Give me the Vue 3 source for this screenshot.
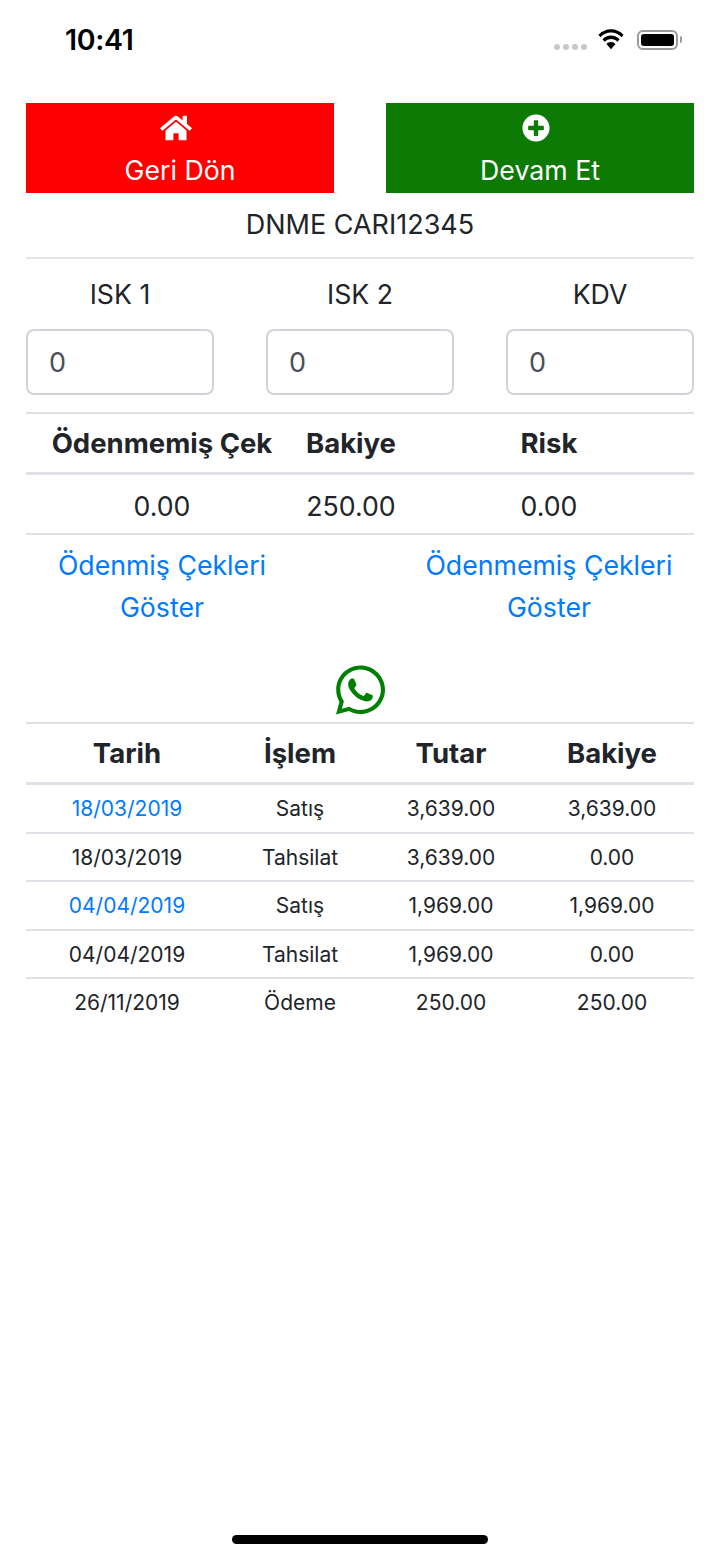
<script setup>
const fields = ['ISK 1', 'ISK 2', 'KDV'];

const rows = [
    { date: '18/03/2019', type: 'Satış', amount: '3,639.00', balance: '3,639.00', link: true },
    { date: '18/03/2019', type: 'Tahsilat', amount: '3,639.00', balance: '0.00', link: false },
    { date: '04/04/2019', type: 'Satış', amount: '1,969.00', balance: '1,969.00', link: true },
    { date: '04/04/2019', type: 'Tahsilat', amount: '1,969.00', balance: '0.00', link: false },
    { date: '26/11/2019', type: 'Ödeme', amount: '250.00', balance: '250.00', link: false },
];
</script>

<template>
    <div class="screen">
        <div class="status-bar">
            <span class="time">10:41</span>
            <div class="status-icons">
                <div class="signal"><i></i><i></i><i></i><i></i></div>
                <svg class="wifi" viewBox="0 0 28 20" preserveAspectRatio="none">
                    <path d="M14 3.2c4.1 0 7.8 1.6 10.6 4.2l1.9-2.1A18.200 18.200 0 0 0 14 .3 18.200 18.200 0 0 0 1.500 5.300l1.900 2.100A15.400 15.400 0 0 1 14 3.200z" />
                    <path d="M14 9c2.500 0 4.800 1 6.500 2.500l2-2.100A12.400 12.400 0 0 0 14 6a12.400 12.400 0 0 0-8.500 3.400l2 2.100A9.700 9.700 0 0 1 14 9z" />
                    <path d="M14 11.900c-1.800 0-3.300.7-4.500 1.700l4.500 4.900 4.500-4.900a6.700 6.700 0 0 0-4.500-1.700z" />
                </svg>
                <div class="battery"><div class="battery-level"></div></div>
                <div class="battery-cap"></div>
            </div>
        </div>

        <main class="content">
            <div class="actions">
                <button class="action action-back">
                    <svg class="action-icon home" viewBox="0 0 576 512">
                        <path d="M280.37 148.26L96 300.11V464a16 16 0 0 0 16 16l112.06-.29a16 16 0 0 0 15.92-16V368a16 16 0 0 1 16-16h64a16 16 0 0 1 16 16v95.640a16 16 0 0 0 16 16.050L464 480a16 16 0 0 0 16-16V300L295.670 148.260a12.190 12.190 0 0 0-15.300 0zM571.600 251.470L488 182.560V44.050a12 12 0 0 0-12-12h-56a12 12 0 0 0-12 12v72.610L318.470 43a48 48 0 0 0-61 0L4.340 251.470a12 12 0 0 0-1.600 16.900l25.500 31A12 12 0 0 0 45.150 301l235.220-193.740a12.190 12.190 0 0 1 15.300 0L530.900 301a12 12 0 0 0 16.900-1.600l25.500-31a12 12 0 0 0-1.700-16.930z" />
                    </svg>
                    <span>Geri Dön</span>
                </button>
                <button class="action action-next">
                    <svg class="action-icon plus" viewBox="0 0 512 512">
                        <path d="M256 8C119 8 8 119 8 256s111 248 248 248 248-111 248-248S393 8 256 8zm144 276c0 6.600-5.400 12-12 12h-92v92c0 6.600-5.400 12-12 12h-56c-6.600 0-12-5.400-12-12v-92h-92c-6.600 0-12-5.400-12-12v-56c0-6.600 5.400-12 12-12h92v-92c0-6.600 5.400-12 12-12h56c6.600 0 12 5.400 12 12v92h92c6.600 0 12 5.400 12 12v56z" />
                    </svg>
                    <span>Devam Et</span>
                </button>
            </div>

            <div class="customer">DNME CARI12345</div>

            <div class="fields">
                <label v-for="field in fields" :key="field" class="field">
                    <span class="field-label">{{ field }}</span>
                    <input class="field-input" type="text" value="0" />
                </label>
            </div>

            <div class="summary summary-head">
                <span>Ödenmemiş Çek</span>
                <span>Bakiye</span>
                <span>Risk</span>
            </div>
            <div class="summary summary-body">
                <span>0.00</span>
                <span>250.00</span>
                <span>0.00</span>
            </div>

            <div class="summary check-links">
                <a class="link">Ödenmiş Çekleri Göster</a>
                <a class="link link-right">Ödenmemiş Çekleri Göster</a>
            </div>

            <div class="whatsapp">
                <svg viewBox="0 0 448 512">
                    <path d="M380.900 97.100C339 55.100 283.200 32 223.900 32c-122.400 0-222 99.600-222 222 0 39.100 10.200 77.300 29.600 111L0 480l117.700-30.900c32.400 17.700 68.900 27 106.100 27h.1c122.300 0 224.100-99.600 224.100-222 0-59.300-25.200-115-67.100-157zm-157 341.600c-33.200 0-65.700-8.900-94-25.700l-6.700-4-69.800 18.300L72 359.200l-4.400-7c-18.500-29.400-28.200-63.300-28.200-98.200 0-101.700 82.800-184.500 184.600-184.500 49.300 0 95.600 19.200 130.400 54.100 34.800 34.900 56.200 81.200 56.100 130.500 0 101.800-84.900 184.600-186.600 184.600zm101.200-138.200c-5.500-2.800-32.800-16.200-37.900-18-5.100-1.900-8.800-2.800-12.500 2.800-3.700 5.600-14.300 18-17.600 21.800-3.200 3.700-6.500 4.200-12 1.400-32.600-16.300-54-29.100-75.500-66-5.700-9.800 5.700-9.100 16.300-30.300 1.800-3.700.9-6.900-.5-9.700-1.400-2.800-12.500-30.100-17.100-41.200-4.500-10.800-9.100-9.300-12.500-9.500-3.200-.2-6.900-.2-10.600-.2-3.700 0-9.700 1.400-14.800 6.900-5.100 5.600-19.400 19-19.400 46.300 0 27.300 19.900 53.700 22.600 57.400 2.800 3.700 39.100 59.700 94.800 83.800 35.200 15.200 49 16.500 66.600 13.900 10.700-1.600 32.800-13.400 37.400-26.400 4.600-13 4.600-24.100 3.200-26.400-1.300-2.500-5-3.900-10.500-6.600z" />
                </svg>
            </div>

            <div class="history">
                <div class="history-row history-head">
                    <span>Tarih</span>
                    <span>İşlem</span>
                    <span>Tutar</span>
                    <span>Bakiye</span>
                </div>
                <div v-for="(row, index) in rows" :key="index" class="history-row history-item">
                    <a v-if="row.link" class="link">{{ row.date }}</a>
                    <span v-else>{{ row.date }}</span>
                    <span>{{ row.type }}</span>
                    <span>{{ row.amount }}</span>
                    <span>{{ row.balance }}</span>
                </div>
            </div>
        </main>

        <div class="home-indicator"></div>
    </div>
</template>

<style scoped>
.screen {
    position: relative;
    width: 720px;
    height: 1558px;
    overflow: hidden;
    background: #fff;
    color: #212529;
    font-family: Inter, "Liberation Sans", sans-serif;
}

/* Status bar */
.status-bar {
    display: flex;
    justify-content: space-between;
    align-items: center;
    height: 103px;
    padding: 0 38px 24px 65px;
    box-sizing: border-box;
}

.time {
    font-size: 28.500px;
    font-weight: 600;
    color: #000;
    letter-spacing: -0.3px;
}

.status-icons {
    display: flex;
    align-items: center;
}

.signal {
    display: flex;
    gap: 3px;
    margin-top: 15px;
    margin-right: 10px;
}

.signal i {
    width: 6px;
    height: 6px;
    border-radius: 50%;
    background: #c8c8c8;
}

.wifi {
    width: 28px;
    height: 22px;
    margin-right: 12px;
    fill: #000;
}

.battery {
    width: 41px;
    height: 20px;
    padding: 2px;
    box-sizing: border-box;
    border: 2px solid #9a9a9a;
    border-radius: 6px;
}

.battery-level {
    height: 100%;
    border-radius: 3px;
    background: #000;
}

.battery-cap {
    width: 2px;
    height: 7px;
    margin-left: 2px;
    border-radius: 0 2px 2px 0;
    background: #9a9a9a;
}

/* Main content */
.content {
    padding: 0 26px;
}

.actions {
    display: flex;
    justify-content: space-between;
}

.action {
    display: flex;
    flex-direction: column;
    align-items: center;
    width: 308px;
    height: 90px;
    padding: 0;
    border: 0;
    color: #fff;
    font-family: inherit;
    font-size: 26.700px;
    line-height: 32px;
}

.action span {
    margin-top: 12px;
}

.action-back {
    background: #ff0000;
}

.action-next {
    background: #0c7a04;
}

.action-icon {
    display: block;
    margin-top: 11px;
    margin-right: 9px;
    height: 28px;
    fill: #fff;
}

.home {
    width: 32px;
}

.plus {
    width: 28px;
}

.customer {
    height: 66px;
    line-height: 64px;
    font-size: 27px;
    text-align: center;
    border-bottom: 2px solid #e4e6e9;
    box-sizing: border-box;
}

.fields {
    display: flex;
    justify-content: space-between;
    padding-bottom: 17px;
}

.field {
    display: flex;
    flex-direction: column;
    width: 188px;
}

.field-label {
    height: 70px;
    line-height: 70px;
    font-size: 26.700px;
    text-align: center;
}

.field-input {
    width: 100%;
    height: 66px;
    padding: 0 21px;
    box-sizing: border-box;
    border: 2px solid #ced4da;
    border-radius: 8px;
    outline: none;
    color: #495057;
    font-family: inherit;
    font-size: 27px;
}

.summary {
    display: grid;
    grid-template-columns: 272px 106px 1fr;
    text-align: center;
}

.summary-head {
    height: 63px;
    line-height: 58px;
    font-size: 27.500px;
    font-weight: 700;
    border-top: 2px solid #dee2e6;
    border-bottom: 3px solid #dee2e6;
    box-sizing: border-box;
    white-space: nowrap;
}

.summary-body {
    height: 60px;
    line-height: 62px;
    font-size: 26.700px;
    border-bottom: 2px solid #dee2e6;
    box-sizing: border-box;
}

.check-links {
    padding-top: 9px;
    font-size: 26.700px;
    line-height: 42px;
}

.link {
    color: #007bff;
}

.link-right {
    grid-column: 3;
    padding: 0 20px;
}

.whatsapp {
    display: flex;
    justify-content: center;
    height: 94px;
    align-items: flex-end;
}

.whatsapp svg {
    display: block;
    width: 49px;
    height: 56px;
    margin-bottom: 4px;
    fill: #008000;
}

.history-row {
    display: grid;
    grid-template-columns: 202px 144px 158px 1fr;
    text-align: center;
    box-sizing: border-box;
}

.history-head {
    height: 63px;
    line-height: 58px;
    font-size: 27.500px;
    font-weight: 700;
    border-top: 2px solid #dee2e6;
    border-bottom: 3px solid #dee2e6;
}

.history-item {
    height: 48.500px;
    line-height: 48px;
    font-size: 21px;
    border-bottom: 2px solid #dee2e6;
}

.history-item:last-child {
    border-bottom: 0;
}

.home-indicator {
    position: absolute;
    left: 232px;
    bottom: 14px;
    width: 256px;
    height: 9px;
    border-radius: 5px;
    background: #000;
}
</style>
